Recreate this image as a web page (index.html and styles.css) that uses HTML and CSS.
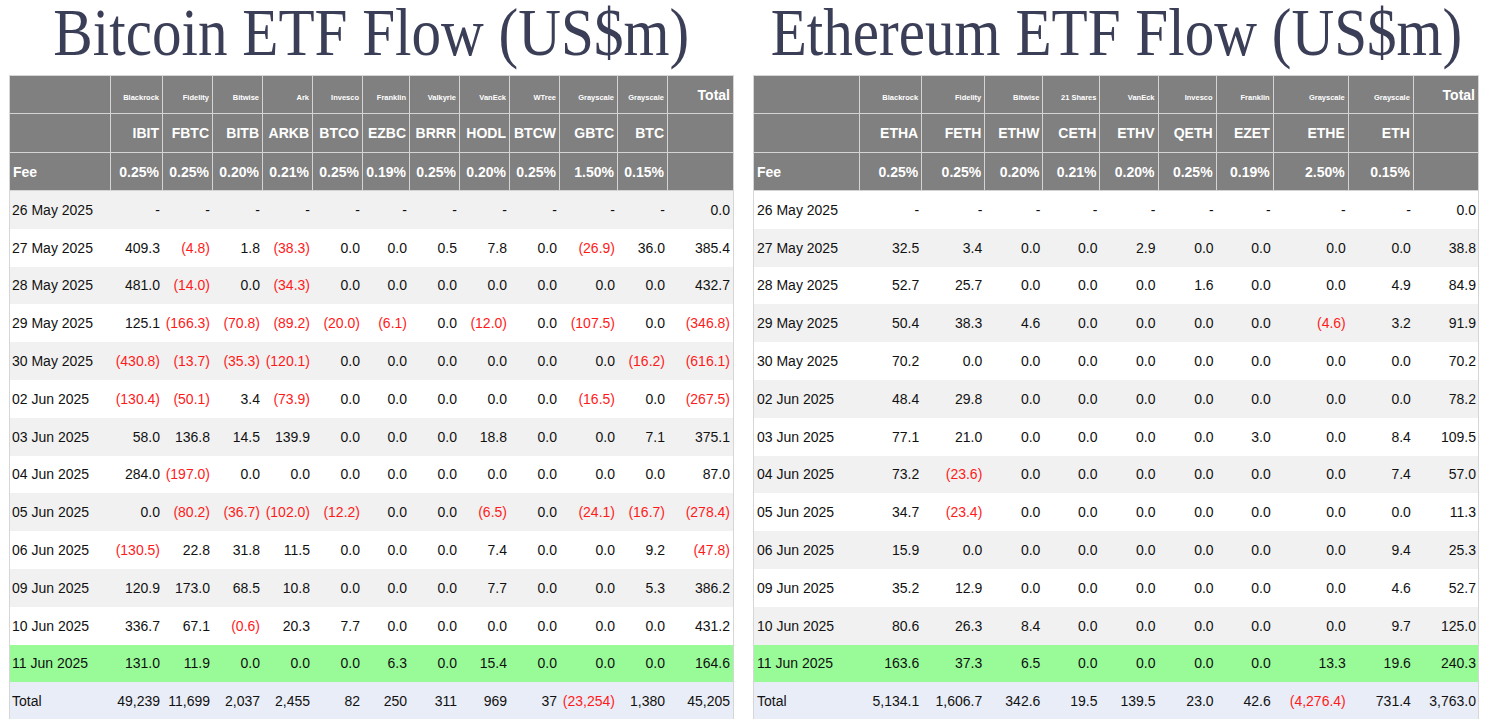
FILE: index.html
```html
<!DOCTYPE html>
<html lang="en">
<head>
<meta charset="utf-8">
<title>ETF Flow</title>
<link rel="stylesheet" href="styles.css">
</head>
<body>
<div class="page">
  <section class="panel panel-btc">
    <h1 class="title"><span>Bitcoin ETF Flow (US$m)</span></h1>
    <table class="flow btc">
      <colgroup>
        <col class="c-label"><col class="w52"><col class="w50"><col class="w50"><col class="w50"><col class="w50"><col class="w47"><col class="w50"><col class="w50"><col class="w50"><col class="w58"><col class="w50"><col class="w65">
      </colgroup>
      <thead>
        <tr class="r-issuer">
          <th></th><th><span class="issuer">Blackrock</span></th><th><span class="issuer">Fidelity</span></th><th><span class="issuer">Bitwise</span></th><th><span class="issuer">Ark</span></th><th><span class="issuer">Invesco</span></th><th><span class="issuer">Franklin</span></th><th><span class="issuer">Valkyrie</span></th><th><span class="issuer">VanEck</span></th><th><span class="issuer">WTree</span></th><th><span class="issuer">Grayscale</span></th><th><span class="issuer">Grayscale</span></th><th class="total-head">Total</th>
        </tr>
        <tr class="r-ticker">
          <th></th><th>IBIT</th><th>FBTC</th><th>BITB</th><th>ARKB</th><th>BTCO</th><th>EZBC</th><th>BRRR</th><th>HODL</th><th>BTCW</th><th>GBTC</th><th>BTC</th><th></th>
        </tr>
        <tr class="r-fee">
          <th class="lbl">Fee</th><th>0.25%</th><th>0.25%</th><th>0.20%</th><th>0.21%</th><th>0.25%</th><th>0.19%</th><th>0.25%</th><th>0.20%</th><th>0.25%</th><th>1.50%</th><th>0.15%</th><th></th>
        </tr>
      </thead>
      <tbody>
        <tr class="shade"><td>26 May 2025</td><td>-</td><td>-</td><td>-</td><td>-</td><td>-</td><td>-</td><td>-</td><td>-</td><td>-</td><td>-</td><td>-</td><td>0.0</td></tr>
        <tr><td>27 May 2025</td><td>409.3</td><td class="neg">(4.8)</td><td>1.8</td><td class="neg">(38.3)</td><td>0.0</td><td>0.0</td><td>0.5</td><td>7.8</td><td>0.0</td><td class="neg">(26.9)</td><td>36.0</td><td>385.4</td></tr>
        <tr class="shade"><td>28 May 2025</td><td>481.0</td><td class="neg">(14.0)</td><td>0.0</td><td class="neg">(34.3)</td><td>0.0</td><td>0.0</td><td>0.0</td><td>0.0</td><td>0.0</td><td>0.0</td><td>0.0</td><td>432.7</td></tr>
        <tr><td>29 May 2025</td><td>125.1</td><td class="neg">(166.3)</td><td class="neg">(70.8)</td><td class="neg">(89.2)</td><td class="neg">(20.0)</td><td class="neg">(6.1)</td><td>0.0</td><td class="neg">(12.0)</td><td>0.0</td><td class="neg">(107.5)</td><td>0.0</td><td class="neg">(346.8)</td></tr>
        <tr class="shade"><td>30 May 2025</td><td class="neg">(430.8)</td><td class="neg">(13.7)</td><td class="neg">(35.3)</td><td class="neg">(120.1)</td><td>0.0</td><td>0.0</td><td>0.0</td><td>0.0</td><td>0.0</td><td>0.0</td><td class="neg">(16.2)</td><td class="neg">(616.1)</td></tr>
        <tr><td>02 Jun 2025</td><td class="neg">(130.4)</td><td class="neg">(50.1)</td><td>3.4</td><td class="neg">(73.9)</td><td>0.0</td><td>0.0</td><td>0.0</td><td>0.0</td><td>0.0</td><td class="neg">(16.5)</td><td>0.0</td><td class="neg">(267.5)</td></tr>
        <tr class="shade"><td>03 Jun 2025</td><td>58.0</td><td>136.8</td><td>14.5</td><td>139.9</td><td>0.0</td><td>0.0</td><td>0.0</td><td>18.8</td><td>0.0</td><td>0.0</td><td>7.1</td><td>375.1</td></tr>
        <tr><td>04 Jun 2025</td><td>284.0</td><td class="neg">(197.0)</td><td>0.0</td><td>0.0</td><td>0.0</td><td>0.0</td><td>0.0</td><td>0.0</td><td>0.0</td><td>0.0</td><td>0.0</td><td>87.0</td></tr>
        <tr class="shade"><td>05 Jun 2025</td><td>0.0</td><td class="neg">(80.2)</td><td class="neg">(36.7)</td><td class="neg">(102.0)</td><td class="neg">(12.2)</td><td>0.0</td><td>0.0</td><td class="neg">(6.5)</td><td>0.0</td><td class="neg">(24.1)</td><td class="neg">(16.7)</td><td class="neg">(278.4)</td></tr>
        <tr><td>06 Jun 2025</td><td class="neg">(130.5)</td><td>22.8</td><td>31.8</td><td>11.5</td><td>0.0</td><td>0.0</td><td>0.0</td><td>7.4</td><td>0.0</td><td>0.0</td><td>9.2</td><td class="neg">(47.8)</td></tr>
        <tr class="shade"><td>09 Jun 2025</td><td>120.9</td><td>173.0</td><td>68.5</td><td>10.8</td><td>0.0</td><td>0.0</td><td>0.0</td><td>7.7</td><td>0.0</td><td>0.0</td><td>5.3</td><td>386.2</td></tr>
        <tr><td>10 Jun 2025</td><td>336.7</td><td>67.1</td><td class="neg">(0.6)</td><td>20.3</td><td>7.7</td><td>0.0</td><td>0.0</td><td>0.0</td><td>0.0</td><td>0.0</td><td>0.0</td><td>431.2</td></tr>
        <tr class="latest"><td>11 Jun 2025</td><td>131.0</td><td>11.9</td><td>0.0</td><td>0.0</td><td>0.0</td><td>6.3</td><td>0.0</td><td>15.4</td><td>0.0</td><td>0.0</td><td>0.0</td><td>164.6</td></tr>
        <tr class="sum"><td>Total</td><td>49,239</td><td>11,699</td><td>2,037</td><td>2,455</td><td>82</td><td>250</td><td>311</td><td>969</td><td>37</td><td class="neg">(23,254)</td><td>1,380</td><td>45,205</td></tr>
      </tbody>
    </table>
  </section>

  <section class="panel panel-eth">
    <h1 class="title"><span>Ethereum ETF Flow (US$m)</span></h1>
    <table class="flow eth">
      <colgroup>
        <col class="c-label-eth"><col class="w62"><col class="w63"><col class="w58"><col class="w57"><col class="w58"><col class="w58"><col class="w57"><col class="w75"><col class="w65"><col class="w64">
      </colgroup>
      <thead>
        <tr class="r-issuer">
          <th></th><th><span class="issuer">Blackrock</span></th><th><span class="issuer">Fidelity</span></th><th><span class="issuer">Bitwise</span></th><th><span class="issuer">21 Shares</span></th><th><span class="issuer">VanEck</span></th><th><span class="issuer">Invesco</span></th><th><span class="issuer">Franklin</span></th><th><span class="issuer">Grayscale</span></th><th><span class="issuer">Grayscale</span></th><th class="total-head">Total</th>
        </tr>
        <tr class="r-ticker">
          <th></th><th>ETHA</th><th>FETH</th><th>ETHW</th><th>CETH</th><th>ETHV</th><th>QETH</th><th>EZET</th><th>ETHE</th><th>ETH</th><th></th>
        </tr>
        <tr class="r-fee">
          <th class="lbl">Fee</th><th>0.25%</th><th>0.25%</th><th>0.20%</th><th>0.21%</th><th>0.20%</th><th>0.25%</th><th>0.19%</th><th>2.50%</th><th>0.15%</th><th></th>
        </tr>
      </thead>
      <tbody>
        <tr><td>26 May 2025</td><td>-</td><td>-</td><td>-</td><td>-</td><td>-</td><td>-</td><td>-</td><td>-</td><td>-</td><td>0.0</td></tr>
        <tr class="shade"><td>27 May 2025</td><td>32.5</td><td>3.4</td><td>0.0</td><td>0.0</td><td>2.9</td><td>0.0</td><td>0.0</td><td>0.0</td><td>0.0</td><td>38.8</td></tr>
        <tr><td>28 May 2025</td><td>52.7</td><td>25.7</td><td>0.0</td><td>0.0</td><td>0.0</td><td>1.6</td><td>0.0</td><td>0.0</td><td>4.9</td><td>84.9</td></tr>
        <tr class="shade"><td>29 May 2025</td><td>50.4</td><td>38.3</td><td>4.6</td><td>0.0</td><td>0.0</td><td>0.0</td><td>0.0</td><td class="neg">(4.6)</td><td>3.2</td><td>91.9</td></tr>
        <tr><td>30 May 2025</td><td>70.2</td><td>0.0</td><td>0.0</td><td>0.0</td><td>0.0</td><td>0.0</td><td>0.0</td><td>0.0</td><td>0.0</td><td>70.2</td></tr>
        <tr class="shade"><td>02 Jun 2025</td><td>48.4</td><td>29.8</td><td>0.0</td><td>0.0</td><td>0.0</td><td>0.0</td><td>0.0</td><td>0.0</td><td>0.0</td><td>78.2</td></tr>
        <tr><td>03 Jun 2025</td><td>77.1</td><td>21.0</td><td>0.0</td><td>0.0</td><td>0.0</td><td>0.0</td><td>3.0</td><td>0.0</td><td>8.4</td><td>109.5</td></tr>
        <tr class="shade"><td>04 Jun 2025</td><td>73.2</td><td class="neg">(23.6)</td><td>0.0</td><td>0.0</td><td>0.0</td><td>0.0</td><td>0.0</td><td>0.0</td><td>7.4</td><td>57.0</td></tr>
        <tr><td>05 Jun 2025</td><td>34.7</td><td class="neg">(23.4)</td><td>0.0</td><td>0.0</td><td>0.0</td><td>0.0</td><td>0.0</td><td>0.0</td><td>0.0</td><td>11.3</td></tr>
        <tr class="shade"><td>06 Jun 2025</td><td>15.9</td><td>0.0</td><td>0.0</td><td>0.0</td><td>0.0</td><td>0.0</td><td>0.0</td><td>0.0</td><td>9.4</td><td>25.3</td></tr>
        <tr><td>09 Jun 2025</td><td>35.2</td><td>12.9</td><td>0.0</td><td>0.0</td><td>0.0</td><td>0.0</td><td>0.0</td><td>0.0</td><td>4.6</td><td>52.7</td></tr>
        <tr class="shade"><td>10 Jun 2025</td><td>80.6</td><td>26.3</td><td>8.4</td><td>0.0</td><td>0.0</td><td>0.0</td><td>0.0</td><td>0.0</td><td>9.7</td><td>125.0</td></tr>
        <tr class="latest"><td>11 Jun 2025</td><td>163.6</td><td>37.3</td><td>6.5</td><td>0.0</td><td>0.0</td><td>0.0</td><td>0.0</td><td>13.3</td><td>19.6</td><td>240.3</td></tr>
        <tr class="sum"><td>Total</td><td>5,134.1</td><td>1,606.7</td><td>342.6</td><td>19.5</td><td>139.5</td><td>23.0</td><td>42.6</td><td class="neg">(4,276.4)</td><td>731.4</td><td>3,763.0</td></tr>
      </tbody>
    </table>
  </section>
</div>
</body>
</html>
```

FILE: styles.css
```css
html, body {
  margin: 0;
  padding: 0;
  background: #ffffff;
}

body {
  font-family: "Liberation Sans", Arial, sans-serif;
  color: #111111;
  overflow: hidden;
}

.page {
  display: flex;
  align-items: flex-start;
  padding-left: 9px;
}

.panel-btc {
  width: 725px;
}

.panel-eth {
  margin-left: 19px;
  width: 726px;
}

.title {
  margin: 0;
  height: 75px;
  font-family: "Liberation Serif", "Times New Roman", serif;
  font-weight: normal;
  font-size: 62px;
  line-height: 64px;
  color: #3b3e57;
  text-align: center;
  white-space: nowrap;
}

.title span {
  display: inline-block;
  line-height: 64px;
  transform: scale(0.954, 1.097);
  transform-origin: 50% 50%;
}

.flow {
  table-layout: fixed;
  border-collapse: separate;
  border-spacing: 0;
  border: 1px solid #d6d6d6;
  border-bottom: none;
  font-size: 14px;
}

.btc { width: 725px; }
.eth { width: 726px; }

.flow th,
.flow td {
  padding: 0 3px 0 0;
  text-align: right;
  white-space: nowrap;
  overflow: hidden;
}

.flow th {
  background: #808080;
  color: #ffffff;
  font-weight: bold;
  border-right: 1px solid #d4d4d4;
  border-bottom: 1px solid #d4d4d4;
}

.flow th:last-child {
  border-right: none;
}

.r-issuer { height: 38px; }
.r-ticker { height: 39px; }
.r-fee { height: 38px; }

.r-issuer th {
  vertical-align: baseline;
  padding-top: 11px;
}

.issuer {
  font-size: 7.5px;
}

.total-head {
  font-size: 14px;
}

.r-ticker th,
.r-fee th {
  vertical-align: middle;
}

.flow th.lbl {
  text-align: left;
  padding-left: 3px;
}

.flow tbody tr {
  height: 37.8px;
}

.flow td {
  vertical-align: middle;
  font-weight: normal;
}

.flow td:first-child {
  text-align: left;
  padding-left: 2px;
}

.eth td:first-child {
  padding-left: 3px;
}

.eth td:last-child {
  padding-right: 2px;
}

.shade td { background: #f1f1f1; }
.latest td { background: #98fb98; }
.sum td { background: #e9edf7; }

.neg { color: #ff1a1a; }

/* column widths */
.c-label { width: 101px; }
.c-label-eth { width: 106px; }
.w47 { width: 47px; }
.w50 { width: 50px; }
.w52 { width: 52px; }
.w57 { width: 57px; }
.w58 { width: 58px; }
.w62 { width: 62px; }
.w63 { width: 63px; }
.w64 { width: 64px; }
.w65 { width: 65px; }
.w75 { width: 75px; }
```
